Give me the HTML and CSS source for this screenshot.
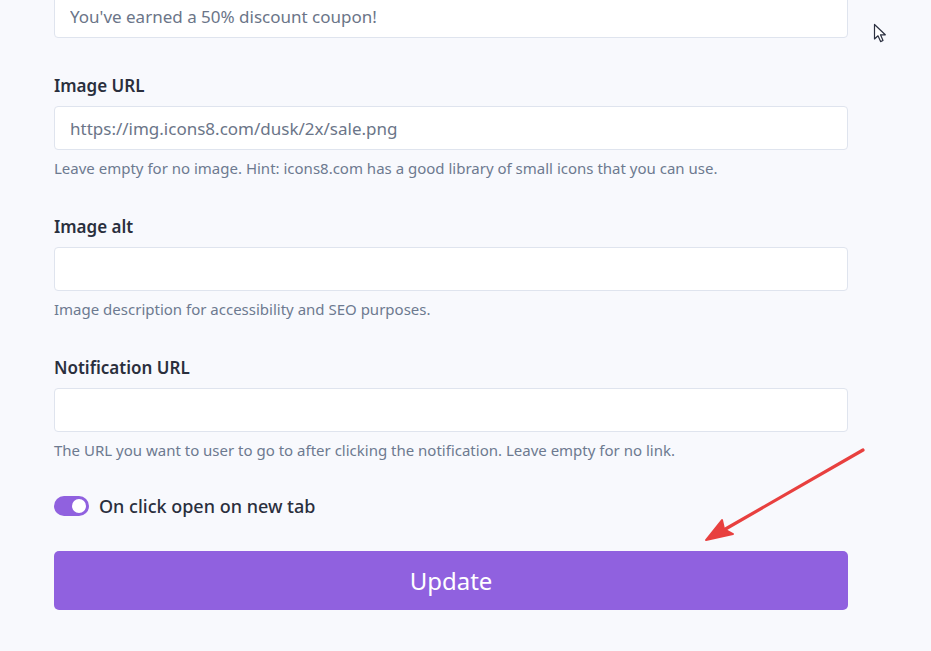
FILE: index.html
```html
<!DOCTYPE html>
<html>
<head>
    <link rel="stylesheet" href="styles.css">
</head>
<body>
<div class="form">
    <div class="group first">
        <input class="field" type="text" value="You've earned a 50% discount coupon!">
    </div>
    <div class="group">
        <label class="label" for="imageUrl">Image URL</label>
        <input class="field" id="imageUrl" type="text" placeholder="https://img.icons8.com/dusk/2x/sale.png">
        <p class="help">Leave empty for no image. Hint: icons8.com has a good library of small icons that you can use.</p>
    </div>
    <div class="group">
        <label class="label" for="imageAlt">Image alt</label>
        <input class="field" id="imageAlt" type="text">
        <p class="help">Image description for accessibility and SEO purposes.</p>
    </div>
    <div class="group">
        <label class="label" for="notifUrl">Notification URL</label>
        <input class="field" id="notifUrl" type="text">
        <p class="help">The URL you want to user to go to after clicking the notification. Leave empty for no link.</p>
    </div>
    <div class="toggle-row">
        <span class="toggle"><span class="knob"></span></span>
        <span class="toggle-text">On click open on new tab</span>
    </div>
    <button class="update">Update</button>
</div>

<svg class="arrow" width="170" height="100" viewBox="0 0 170 100">
    <line x1="161" y1="4" x2="20" y2="85" stroke="#e8403f" stroke-width="3.2" stroke-linecap="round"/>
    <polygon points="4,94 20,74 22,83 31,88" fill="#e8403f" stroke="#e8403f" stroke-width="2" stroke-linejoin="round"/>
</svg>

<svg class="cursor" width="16" height="22" viewBox="0 0 16 22">
    <path d="M1.5 1.5 L1.5 16 L5 12.8 L7.6 18.6 L10 17.5 L7.5 11.8 L12.3 11.8 Z" fill="#fff" stroke="#2b3040" stroke-width="1.2" stroke-linejoin="round"/>
</svg>
</body>
</html>
```

FILE: styles.css
```css
*{
    box-sizing: border-box;
    font-family: 'Noto Sans', 'Open Sans', sans-serif;
}
html, body{
    background: #f8f9fd;
}
body{
    margin: 0;
    overflow: hidden;
}
.form{
    width: 794px;
    margin: -6px 0 0 54px;
}
.group{
    display: flex;
    flex-direction: column;
    margin-bottom: 37px;
}
.group.first{
    margin-bottom: 36px;
}
.label{
    font-size: 17px;
    line-height: 24px;
    font-weight: 600;
    color: #2a2f3d;
    margin-bottom: 8px;
}
.field{
    height: 44px;
    border: 1px solid #dfe4ee;
    border-radius: 4px;
    background: #fff;
    padding: 0 15px;
    font-size: 17px;
    color: #6b7588;
    outline: none;
}
.field::placeholder{
    color: #6b7588;
}
.help{
    margin: 8px 0 0;
    font-size: 15px;
    line-height: 20px;
    color: #6d7a90;
}
.toggle-row{
    display: flex;
    align-items: center;
    gap: 10px;
    height: 24px;
    margin: -3px 0 33px;
}
.toggle{
    width: 35px;
    height: 20px;
    border-radius: 10px;
    background: #9061df;
    position: relative;
}
.knob{
    position: absolute;
    right: 3px;
    top: 3px;
    width: 14px;
    height: 14px;
    border-radius: 50%;
    background: #fff;
}
.toggle-text{
    font-size: 18px;
    font-weight: 500;
    color: #2a2f3d;
}
.update{
    width: 100%;
    height: 59px;
    border: none;
    border-radius: 5px;
    background: #9061df;
    color: #fff;
    font-size: 24px;
}
.arrow{
    position: absolute;
    left: 702px;
    top: 446px;
}
.cursor{
    position: absolute;
    left: 873px;
    top: 23px;
}
```
